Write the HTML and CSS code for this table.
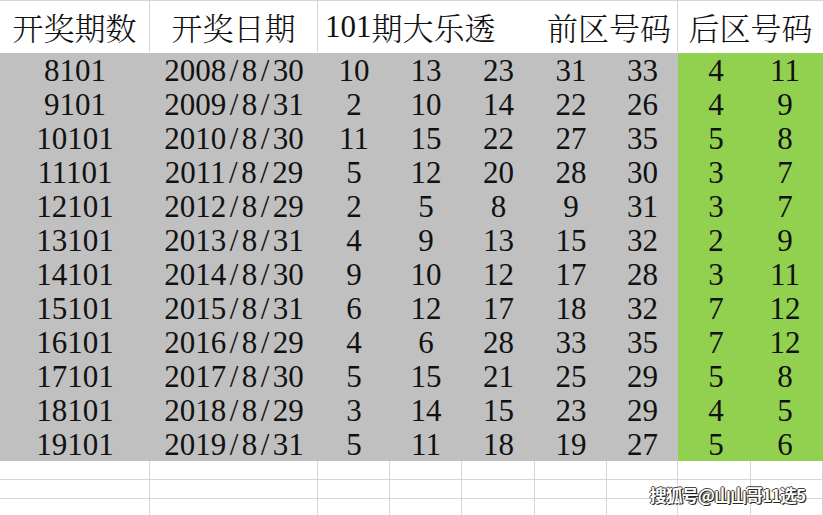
FILE: index.html
```html
<!DOCTYPE html>
<html lang="zh">
<head>
<meta charset="utf-8">
<title>101期大乐透</title>
<link rel="stylesheet" href="styles.css">
</head>
<body>
<div class="sheet">
  <div class="grid">
    <div class="hd c1">开奖期数</div>
    <div class="hd c2">开奖日期</div>
    <div class="hd c3"><span class="num">101</span>期大乐透<span class="spacer"></span>前区号码</div>
    <div class="hd c4">后区号码</div>

    <div class="d">8101</div><div class="d">2008<span class="sl">/</span>8<span class="sl">/</span>30</div><div class="d">10</div><div class="d">13</div><div class="d">23</div><div class="d">31</div><div class="d">33</div><div class="d g">4</div><div class="d g2">11</div>
    <div class="d">9101</div><div class="d">2009<span class="sl">/</span>8<span class="sl">/</span>31</div><div class="d">2</div><div class="d">10</div><div class="d">14</div><div class="d">22</div><div class="d">26</div><div class="d g">4</div><div class="d g2">9</div>
    <div class="d">10101</div><div class="d">2010<span class="sl">/</span>8<span class="sl">/</span>30</div><div class="d">11</div><div class="d">15</div><div class="d">22</div><div class="d">27</div><div class="d">35</div><div class="d g">5</div><div class="d g2">8</div>
    <div class="d">11101</div><div class="d">2011<span class="sl">/</span>8<span class="sl">/</span>29</div><div class="d">5</div><div class="d">12</div><div class="d">20</div><div class="d">28</div><div class="d">30</div><div class="d g">3</div><div class="d g2">7</div>
    <div class="d">12101</div><div class="d">2012<span class="sl">/</span>8<span class="sl">/</span>29</div><div class="d">2</div><div class="d">5</div><div class="d">8</div><div class="d">9</div><div class="d">31</div><div class="d g">3</div><div class="d g2">7</div>
    <div class="d">13101</div><div class="d">2013<span class="sl">/</span>8<span class="sl">/</span>31</div><div class="d">4</div><div class="d">9</div><div class="d">13</div><div class="d">15</div><div class="d">32</div><div class="d g">2</div><div class="d g2">9</div>
    <div class="d">14101</div><div class="d">2014<span class="sl">/</span>8<span class="sl">/</span>30</div><div class="d">9</div><div class="d">10</div><div class="d">12</div><div class="d">17</div><div class="d">28</div><div class="d g">3</div><div class="d g2">11</div>
    <div class="d">15101</div><div class="d">2015<span class="sl">/</span>8<span class="sl">/</span>31</div><div class="d">6</div><div class="d">12</div><div class="d">17</div><div class="d">18</div><div class="d">32</div><div class="d g">7</div><div class="d g2">12</div>
    <div class="d">16101</div><div class="d">2016<span class="sl">/</span>8<span class="sl">/</span>29</div><div class="d">4</div><div class="d">6</div><div class="d">28</div><div class="d">33</div><div class="d">35</div><div class="d g">7</div><div class="d g2">12</div>
    <div class="d">17101</div><div class="d">2017<span class="sl">/</span>8<span class="sl">/</span>30</div><div class="d">5</div><div class="d">15</div><div class="d">21</div><div class="d">25</div><div class="d">29</div><div class="d g">5</div><div class="d g2">8</div>
    <div class="d">18101</div><div class="d">2018<span class="sl">/</span>8<span class="sl">/</span>29</div><div class="d">3</div><div class="d">14</div><div class="d">15</div><div class="d">23</div><div class="d">29</div><div class="d g">4</div><div class="d g2">5</div>
    <div class="d">19101</div><div class="d">2019<span class="sl">/</span>8<span class="sl">/</span>31</div><div class="d">5</div><div class="d">11</div><div class="d">18</div><div class="d">19</div><div class="d">27</div><div class="d g">5</div><div class="d g2">6</div>

    <div class="e"></div><div class="e"></div><div class="e"></div><div class="e"></div><div class="e"></div><div class="e"></div><div class="e"></div><div class="e"></div><div class="e"></div>
    <div class="e"></div><div class="e"></div><div class="e"></div><div class="e"></div><div class="e"></div><div class="e"></div><div class="e"></div><div class="e"></div><div class="e"></div>
    <div class="e last"></div><div class="e last"></div><div class="e last"></div><div class="e last"></div><div class="e last"></div><div class="e last"></div><div class="e last"></div><div class="e last"></div><div class="e last"></div>
  </div>
  <div class="watermark">搜狐号@山山哥11选5</div>
</div>
</body>
</html>
```

FILE: styles.css
```css
html, body {
  margin: 0;
  padding: 0;
  background: #ffffff;
}

.sheet {
  position: relative;
  width: 823px;
  height: 515px;
  overflow: hidden;
}

.grid {
  display: grid;
  grid-template-columns: 150px 168px 72px 72px 73px 72px 71px 73px 72px;
  grid-template-rows: 52px repeat(12, 34px) 19px 19px 17px;
  border-top: 1px solid #d6d6d6;
  box-sizing: border-box;
}

.hd {
  display: flex;
  align-items: center;
  justify-content: center;
  font-family: "Noto Serif CJK SC", "Noto Sans CJK SC", serif;
  font-weight: 300;
  font-size: 31px;
  color: #111111;
  background: #ffffff;
  border-right: 1px solid #d6d6d6;
  box-sizing: border-box;
  height: 51px;
}

.num {
  font-family: "Liberation Serif", serif;
  font-weight: 400;
  font-size: 31px;
}

.c1 { grid-column: 1; }
.c2 { grid-column: 2; }
.c3 {
  grid-column: 3 / span 5;
  justify-content: flex-start;
  padding-left: 7px;
  padding-right: 6px;
}
.c3 .spacer { flex: 1; }
.c4 {
  grid-column: 8 / span 2;
  border-right: none;
}

.d {
  display: flex;
  align-items: center;
  justify-content: center;
  background: #c0c0c0;
  font-family: "Liberation Serif", serif;
  font-size: 31px;
  color: #111111;
  line-height: 1;
  padding-top: 1px;
  box-sizing: border-box;
}

.d.g {
  background: #92d050;
  padding-left: 3px;
}

.d.g2 {
  background: #92d050;
  padding-right: 4px;
}

.sl {
  display: inline-block;
  width: 0.5em;
  text-align: center;
}

.e {
  border-right: 1px solid #d6d6d6;
  border-bottom: 1px solid #d6d6d6;
  box-sizing: border-box;
}
.e.last { border-bottom: none; }

.watermark {
  position: absolute;
  right: 18px;
  bottom: 8px;
  font-family: "Noto Sans CJK SC", sans-serif;
  font-weight: 700;
  font-size: 17px;
  color: #ffffff;
  letter-spacing: -1px;
  text-shadow: 1px 1px 0 #222, -1px 0 0 #444, 0 -1px 0 #444, 1px 0 1px #222;
}
```
